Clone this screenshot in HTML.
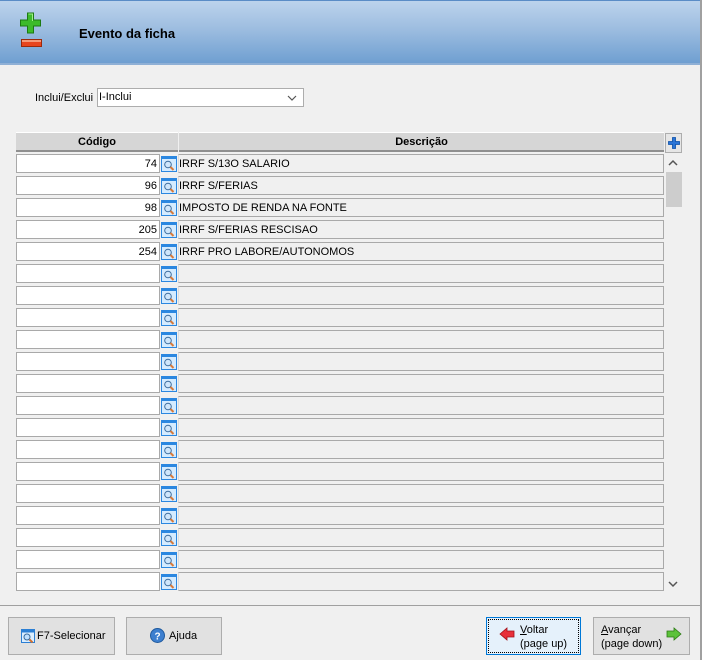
<!DOCTYPE html>
<html><head><meta charset="utf-8"><style>
*{margin:0;padding:0;box-sizing:border-box}
body{width:702px;height:660px;background:#f0f0f0;font-family:"Liberation Sans",sans-serif;font-size:11px;color:#000;position:relative;overflow:hidden}
.a{position:absolute}
.hdr{left:0;top:0;width:702px;height:65px;background:linear-gradient(#bcd3ec,#9dbde0 45%,#6f9fd1);border-top:1px solid #5a8cc6;border-bottom:2px solid #8fb0d6}
.ttl{left:79px;top:26px;font-weight:bold;font-size:13px}
.th{background:#d6d6d6;border-top:1px solid #fff;border-bottom:2px solid #8f8f8f;height:20px;font-weight:bold;text-align:center;line-height:18px}
.cin{background:#fff;border:1px solid #a9a9a9;height:19px;text-align:right;padding-right:2px;line-height:18px}
.din{background:#f0f0f0;border:1px solid #a9a9a9;border-left-color:#dcdcdc;height:19px;line-height:18px;padding-left:0}
.btn{background:#e1e1e1;border:1px solid #adadad;height:38px;font-size:11px}
</style></head><body>
<div class="a hdr"></div>
<svg class="a" style="left:20px;top:12px" width="24" height="38" viewBox="0 0 24 38">
<path d="M7.5 1h6v7h7v6h-7v7h-6v-7h-7V8h7z" fill="#3dbb2a" stroke="#1d7a12" stroke-width="1"/>
<path d="M8.5 2h4v7" fill="none" stroke="#9ef28a" stroke-width="1"/>
<rect x="1.5" y="27.5" width="20" height="7" fill="#e8451e" stroke="#9a2a0c"/>
<rect x="2" y="28" width="19" height="2" fill="#f59a7a"/>
</svg>
<div class="a ttl">Evento da ficha</div>
<div class="a" style="right:0;top:0;width:2px;height:660px;background:#a0a0a0"></div>
<div class="a" style="left:35px;top:92px">Inclui/Exclui</div>
<div class="a" style="left:97px;top:88px;width:207px;height:19px;background:#fff;border:1px solid #adadad;padding-left:1px;line-height:17px">I-Inclui</div>
<svg class="a" style="left:287px;top:95px" width="10" height="6"><path d="M1 1l4 4 4-4" fill="none" stroke="#555" stroke-width="1.2"/></svg>
<div class="a th" style="left:16px;top:132px;width:162px">Código</div>
<div class="a th" style="left:179px;top:132px;width:485px">Descrição</div>
<div class="a" style="left:665px;top:133px;width:17px;height:20px;border:1px solid #adadad;background:#e6e6e6"></div>
<svg class="a" style="left:668px;top:137px" width="12" height="12"><path d="M4.5 0.5h3v4h4v3h-4v4h-3v-4h-4v-3h4z" fill="#2a74d6" stroke="#0b4fa8" stroke-width="0.8"/></svg>
<div class="a" style="left:666px;top:172px;width:16px;height:35px;background:#cdcdcd"></div>
<svg class="a" style="left:668px;top:159px" width="10" height="7"><path d="M1 6l4-4 4 4" fill="none" stroke="#555" stroke-width="1.5"/></svg>
<svg class="a" style="left:668px;top:581px" width="10" height="7"><path d="M1 1l4 4 4-4" fill="none" stroke="#555" stroke-width="1.5"/></svg>
<div id="rows"></div>
<div class="a" style="left:0;top:605px;width:700px;height:1px;background:#a0a0a0"></div>
<div class="a btn" style="left:8px;top:617px;width:107px"></div>
<svg class="a" style="left:21px;top:629px" width="14" height="14"><rect x="0.5" y="0.5" width="13" height="13" fill="#dbeeff" stroke="#2b7fd4"/><rect x="0.5" y="0.5" width="13" height="3" fill="#2b7fd4"/><circle cx="6" cy="8" r="3" fill="#bfe0ff" stroke="#3a6a9a"/><path d="M8.5 10.5l3 3" stroke="#d07030" stroke-width="2"/></svg>
<div class="a" style="left:37px;top:630px">F7-Selecionar</div>
<div class="a btn" style="left:126px;top:617px;width:96px"></div>
<svg class="a" style="left:150px;top:628px" width="15" height="15"><circle cx="7.5" cy="7.5" r="7" fill="#3d7fcf" stroke="#1f5a9e"/><text x="7.5" y="11.5" font-size="10" font-weight="bold" fill="#fff" text-anchor="middle" font-family="Liberation Sans">?</text></svg>
<div class="a" style="left:169px;top:630px">A<u>j</u>uda</div>
<div class="a" style="left:486px;top:617px;width:95px;height:38px;background:#e5f1fb;border:1px solid #0078d7"><div style="position:absolute;left:1px;top:1px;right:1px;bottom:1px;border:1px dotted #000"></div></div>
<svg class="a" style="left:499px;top:627px" width="16" height="14"><path d="M1 7l7-6v3h7v6H8v3z" fill="#e8303a" stroke="#a01018" stroke-width="0.8"/></svg>
<div class="a" style="left:520px;top:623px;line-height:14px"><u>V</u>oltar<br>(page up)</div>
<div class="a btn" style="left:593px;top:617px;width:97px"></div>
<div class="a" style="left:601px;top:623px;line-height:14px"><u>A</u>vançar<br>(page down)</div>
<svg class="a" style="left:666px;top:627px" width="16" height="14"><path d="M15 7L8 1v3H1v6h7v3z" fill="#5cc23a" stroke="#2c7a14" stroke-width="0.8"/></svg>
<script>
var d=[["74","IRRF S/13O SALARIO"],["96","IRRF S/FERIAS"],["98","IMPOSTO DE RENDA NA FONTE"],["205","IRRF S/FERIAS RESCISAO"],["254","IRRF PRO LABORE/AUTONOMOS"]];
var h="";
for(var i=0;i<20;i++){var y=154+i*22;var r=d[i]||["",""];
h+='<div class="a cin" style="left:16px;top:'+y+'px;width:144px">'+r[0]+'</div>';
h+='<svg class="a" style="left:161px;top:'+(y+2)+'px" width="16" height="16"><rect x="0.5" y="0.5" width="15" height="15" fill="#d4ebff" stroke="#2b87e0"/><rect x="0.5" y="0.5" width="15" height="2.5" fill="#2b87e0"/><circle cx="7" cy="8.5" r="3.3" fill="#cfe6fb" stroke="#3f6f9f"/><path d="M9.5 11l3 3" stroke="#d87a3a" stroke-width="2"/></svg>';
h+='<div class="a din" style="left:178px;top:'+y+'px;width:486px">'+r[1]+'</div>';}
document.getElementById("rows").innerHTML=h;
</script>
</body></html>
